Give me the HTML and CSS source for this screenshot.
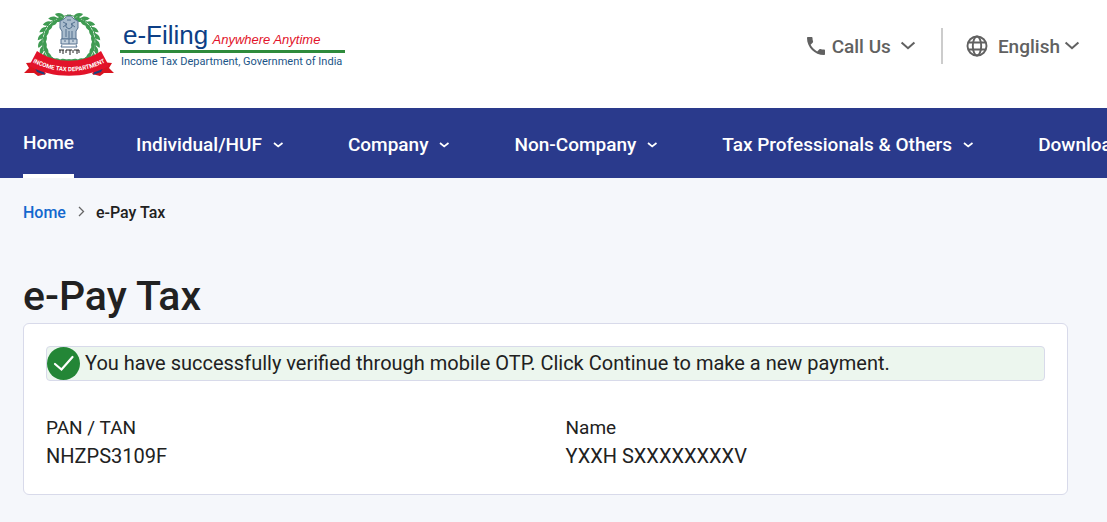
FILE: index.html
```
<!DOCTYPE html>
<html lang="en">
<head>
    <meta charset="UTF-8">
    <meta name="viewport" content="width=device-width, initial-scale=1.0">
    <title>e-Pay Tax</title>
    <link rel="stylesheet" href="styles.css">
</head>
<body>
    <svg class="defs" width="0" height="0" aria-hidden="true">
        <symbol id="chevron" viewBox="0 0 14 14">
            <path d="M2 5l5 4.500L12 5" fill="none" stroke="currentColor" stroke-width="1.600"/>
        </symbol>
        <symbol id="chevron-small" viewBox="0 0 14 14">
            <path d="M2 5l4.200 3.500L10.500 5" fill="none" stroke="currentColor" stroke-width="1.700"/>
        </symbol>
        <path id="leaf" d="M45 4c-2-4-5-5-9-4 2 4 5 5 9 4zM45 4c-2 4-5 5-9 4 2-4 5-5 9-4z" fill="#3f9b52"/>
        <!-- one side of the wreath, mirrored for the other -->
        <g id="wreath">
            <path d="M47 3C29 5 18 14 18 29c0 9 8 18 20 21" fill="none" stroke="#2f8b42" stroke-width="1"/>
            <use href="#leaf" transform="translate(0 -1) rotate(-168 45 28)"/>
            <use href="#leaf" transform="translate(0 -1) rotate(-154 45 28)"/>
            <use href="#leaf" transform="translate(0 -1) rotate(-140 45 29)"/>
            <use href="#leaf" transform="rotate(-125 45 30)"/>
            <use href="#leaf" transform="rotate(-112 45 30)"/>
            <use href="#leaf" transform="rotate(-98 45 30)"/>
            <use href="#leaf" transform="rotate(-84 45 30)"/>
            <use href="#leaf" transform="rotate(-70 45 30)"/>
            <use href="#leaf" transform="rotate(-55 45 30)"/>
            <use href="#leaf" transform="rotate(-40 45 30)"/>
            <use href="#leaf" transform="rotate(-25 45 30)"/>
            <use href="#leaf" transform="rotate(-10 45 30)"/>
        </g>
    </svg>

    <header class="top">
        <a class="logo" href="#">
            <svg class="emblem" viewBox="0 0 90 66" aria-hidden="true">
                <use href="#wreath"/>
                <use href="#wreath" transform="matrix(-1 0 0 1 90 0)"/>
                <g fill="none" stroke="#54718f" stroke-width="1">
                    <path fill="#a9bccd" d="M40 7c3-4 7-4 10 0l4 2v7l-2 3v8H38v-8l-2-3V9z"/>
                    <path d="M39 10l4 2-4 3m12-5l-4 2 4 3M43 8h4m-5 4v3l3 2 3-2v-3M42 17v8m3-6v7m3-7v7"/>
                    <path fill="#c5d2de" d="M37 27h16v5H37z"/>
                    <path d="M38 33l-1 2h16l-1-2M45 27v5m-5-3h2m6 0h2"/>
                </g>
                <path d="M35 38h5m2 0h6m2 0h5M36 38v3m3-3v4m3-4v3m4-3v5m3-5v3m4-3v4m2-4v3" stroke="#222" stroke-width="1" fill="none"/>
                <path d="M0 61l5-5-3-5 12-1 8 12-8 2-4-3zM90 61l-5-5 3-5-12-1-8 12 8 2 4-3z" fill="#d9131f"/>
                <path d="M10 54l3 6 8 3-3-8zM80 54l-3 6-8 3 3-8z" fill="#1f3f7a"/>
                <path d="M13 39c18 13 46 13 64 0l8 15c-24 13-56 13-80 0z" fill="#e2132a"/>
                <path id="ribbon" d="M5 48c24 15 56 15 80 0" fill="none"/>
                <text class="ribbon-text"><textPath href="#ribbon" startOffset="50%" text-anchor="middle">INCOME TAX DEPARTMENT</textPath></text>
            </svg>
            <span class="logo-text">
                <span class="logo-title">e-Filing <em>Anywhere Anytime</em></span>
                <span class="logo-sub">Income Tax Department, Government of India</span>
            </span>
        </a>
        <div class="tools">
            <button class="tool call" type="button">
                <svg class="tool-icon" viewBox="0 0 24 24" aria-hidden="true"><path fill="currentColor" d="M6.620 10.790c1.440 2.830 3.760 5.140 6.590 6.590l2.200-2.200c.27-.27.67-.36 1.020-.24 1.120.37 2.330.57 3.570.57.55 0 1 .45 1 1V20c0 .55-.45 1-1 1-9.390 0-17-7.610-17-17 0-.55.45-1 1-1h3.500c.55 0 1 .45 1 1 0 1.250.2 2.450.57 3.570.11.35.03.74-.25 1.020z"/></svg>
                Call Us
                <svg class="tool-arrow" aria-hidden="true"><use href="#chevron"/></svg>
            </button>
            <button class="tool lang" type="button">
                <svg class="tool-icon" viewBox="0 0 24 24" aria-hidden="true"><g fill="none" stroke="currentColor" stroke-width="1.900"><circle cx="12" cy="12" r="9.500"/><ellipse cx="12" cy="12" rx="4.200" ry="9.500"/><path d="M3 8.500h18M3 15.500h18"/></g></svg>
                English
                <svg class="tool-arrow" aria-hidden="true"><use href="#chevron"/></svg>
            </button>
        </div>
    </header>

    <nav class="nav">
        <a class="active" href="#">Home</a>
        <a href="#">Individual/HUF <svg aria-hidden="true"><use href="#chevron-small"/></svg></a>
        <a href="#">Company <svg aria-hidden="true"><use href="#chevron-small"/></svg></a>
        <a href="#">Non-Company <svg aria-hidden="true"><use href="#chevron-small"/></svg></a>
        <a href="#">Tax Professionals &amp; Others <svg aria-hidden="true"><use href="#chevron-small"/></svg></a>
        <a href="#">Downloads</a>
    </nav>

    <main class="page">
        <div class="breadcrumb">
            <a href="#">Home</a>
            <svg viewBox="0 0 14 14" aria-hidden="true"><path d="M5 1l4.500 4.500L5 10" fill="none" stroke="#666" stroke-width="1.300"/></svg>
            <span>e-Pay Tax</span>
        </div>
        <h1>e-Pay Tax</h1>
        <section class="card">
            <div class="alert">
                <svg viewBox="0 0 33 33" aria-hidden="true"><circle cx="16.500" cy="16.500" r="16.500" fill="#238636"/><path d="M8 17l6.500 5.500L25.500 10" fill="none" stroke="#fff" stroke-width="2.200" stroke-linecap="round"/></svg>
                <span>You have successfully verified through mobile OTP. Click Continue to make a new payment.</span>
            </div>
            <dl class="details">
                <div>
                    <dt>PAN / TAN</dt>
                    <dd>NHZPS3109F</dd>
                </div>
                <div>
                    <dt>Name</dt>
                    <dd>YXXH SXXXXXXXXV</dd>
                </div>
            </dl>
        </section>
    </main>
</body>
</html>
```
FILE: styles.css
```
* {
    box-sizing: border-box;
}
body {
    margin: 0;
    font-family: Roboto, Arial, sans-serif;
    background: #f5f7fb;
    color: #212121;
    overflow-x: hidden;
}
a {
    text-decoration: none;
}
.defs {
    position: absolute;
}
.top {
    display: flex;
    justify-content: space-between;
    align-items: flex-start;
    background: #fff;
    padding: 12px 26px 30px 24px;
}
.logo {
    display: flex;
    gap: 6px;
}
.emblem {
    width: 90px;
    height: 66px;
}
.ribbon-text {
    font: bold 6px Roboto, Arial, sans-serif;
    fill: #fff;
}
.logo-text {
    display: flex;
    flex-direction: column;
    padding-top: 9px;
}
.logo-title {
    padding: 0 3px 1px;
    border-bottom: 3px solid #2e8b3c;
    font-family: "Liberation Sans", Arial, sans-serif;
    font-size: 26px;
    line-height: 28px;
    color: #0d3f86;
    white-space: nowrap;
}
.logo-title em {
    margin-left: -3px;
    font-size: 13px;
    line-height: 1;
    color: #e2132a;
}
.logo-sub {
    padding: 0 3px 0 1px;
    font-size: 11px;
    line-height: 18px;
    color: #1c5587;
}
.tools {
    display: flex;
    padding-top: 16px;
}
.tool {
    display: flex;
    align-items: center;
    height: 36px;
    border: 0;
    padding: 0;
    background: none;
    font: 500 19px Roboto, Arial, sans-serif;
    color: #616161;
}
.tool-icon {
    width: 24px;
    height: 24px;
    margin-right: 4px;
}
.tool-arrow {
    width: 18px;
    height: 18px;
    margin: 0 0 3px 8px;
}
.call {
    padding-right: 24px;
    border-right: 2px solid #ccc;
}
.lang {
    padding-left: 22px;
}
.lang .tool-icon {
    margin-right: 9px;
}
.lang .tool-arrow {
    margin-left: 3px;
}
.nav {
    display: flex;
    gap: 62px;
    height: 70px;
    padding-left: 23px;
    background: #2a3a8c;
    overflow: hidden;
}
.nav a {
    display: flex;
    flex: none;
    align-items: center;
    gap: 10px;
    padding-top: 3px;
    font-size: 19px;
    font-weight: 500;
    color: #fff;
}
.nav .active {
    border-bottom: 4px solid #fff;
}
.nav svg {
    width: 14px;
    height: 14px;
}
.page {
    padding: 25px 39px 28px 23px;
}
.breadcrumb {
    display: flex;
    align-items: center;
    gap: 8px;
    font-size: 16px;
    line-height: 20px;
    font-weight: 500;
}
.breadcrumb a {
    color: #1368ce;
}
.breadcrumb svg {
    width: 14px;
    height: 14px;
}
h1 {
    margin: 49px 0 3px;
    font-size: 41px;
    line-height: 48px;
    font-weight: 500;
}
.card {
    padding: 22px 22px 23px;
    border: 1px solid #d8daea;
    border-radius: 6px;
    background: #fff;
}
.alert {
    display: flex;
    align-items: center;
    gap: 5px;
    border: 1px solid #d8daea;
    border-radius: 4px;
    background: #ecf6ee;
    font-size: 20px;
}
.alert svg {
    flex: none;
    width: 33px;
    height: 33px;
}
.alert span {
    padding-bottom: 2px;
}
.details {
    display: grid;
    grid-template-columns: 1fr 1fr;
    gap: 40px;
    margin: 32px 0 0;
    font-size: 19px;
    line-height: 29px;
}
.details dd {
    margin: 0;
    font-size: 20px;
}
```
